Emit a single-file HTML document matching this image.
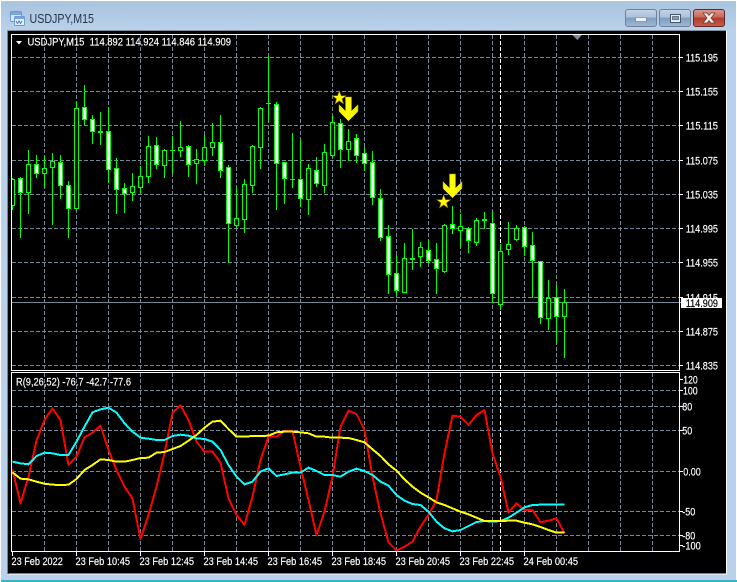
<!DOCTYPE html>
<html><head><meta charset="utf-8"><title>USDJPY,M15</title>
<style>html,body{margin:0;padding:0;background:#fff;width:737px;height:582px;overflow:hidden}svg{display:block}text{font-family:"Liberation Sans",sans-serif;font-size:11px;fill:#fff;stroke:#fff;stroke-width:.18px}</style></head>
<body>
<svg xmlns="http://www.w3.org/2000/svg" width="737" height="582" viewBox="0 0 737 582">
<defs>
<linearGradient id="tb" x1="0" y1="0" x2="0" y2="1"><stop offset="0" stop-color="#b0c7de"/><stop offset=".1" stop-color="#aac5df"/><stop offset="1" stop-color="#bad2ea"/></linearGradient>
<linearGradient id="bt" x1="0" y1="0" x2="0" y2="1"><stop offset="0" stop-color="#c3d5e8"/><stop offset=".45" stop-color="#a9c1da"/><stop offset=".5" stop-color="#7f9dbe"/><stop offset="1" stop-color="#9db9d6"/></linearGradient>
<linearGradient id="cl" x1="0" y1="0" x2="0" y2="1"><stop offset="0" stop-color="#dd9a8e"/><stop offset=".45" stop-color="#c8675a"/><stop offset=".5" stop-color="#b23a2c"/><stop offset="1" stop-color="#c95f48"/></linearGradient>
<linearGradient id="ar" x1="0" y1="0" x2="1" y2="0"><stop offset="0" stop-color="#f5f500"/><stop offset=".5" stop-color="#ff0"/><stop offset="1" stop-color="#e8e800"/></linearGradient>
</defs>
<path d="M1 582V5Q1 1 5 1H732Q736 1 736 5V582Z" fill="#b9d1ea"/>
<rect x="1" y="1" width="735" height="30" fill="url(#tb)"/>
<rect x="1" y="580" width="736" height="2" fill="#3ab4c4"/>
<rect x="7" y="31" width="720" height="543.500" fill="#fff"/>
<rect x="7" y="30" width="719" height="1" fill="#7f8fa0"/>
<rect x="7" y="31" width="2" height="543" fill="#7c8490"/>
<rect x="8" y="31" width="718" height="542.500" fill="#000"/>

<!-- Title icon -->
<rect x="10.500" y="11.500" width="11" height="10" rx="1" fill="#d9e8f7" stroke="#6f9bd4"/>
<rect x="11" y="12" width="10" height="3" fill="#7aa5df"/>
<rect x="14.500" y="16.500" width="10" height="9" rx="1" fill="#e4effa" stroke="#6f9bd4"/>
<rect x="15" y="17" width="9" height="2" fill="#7aa5df"/>
<path d="M16 21l1.500 2.500 1.500-2.500 1.500 2.500 1.500-2.500" fill="none" stroke="#4c7cc0"/>
<text x="29.500" y="23" textLength="64.500" lengthAdjust="spacingAndGlyphs" style="font-size:12.500px;fill:#27334a;stroke:none">USDJPY,M15</text>

<!-- Window buttons -->
<rect x="625.500" y="9.500" width="31" height="17" rx="2.500" fill="url(#bt)" stroke="#6f8199"/>
<rect x="635.500" y="17.500" width="11" height="4" rx="1" fill="#eef2f7" stroke="#5d6f86" stroke-width=".6"/>
<rect x="659.500" y="9.500" width="31" height="17" rx="2.500" fill="url(#bt)" stroke="#6f8199"/>
<rect x="670.500" y="14.500" width="10" height="8" fill="#e6edf5" stroke="#47566b"/>
<rect x="672.500" y="16.500" width="6" height="3" fill="#7f9dbe" stroke="#47566b" stroke-width=".7"/>
<rect x="693.500" y="9.500" width="31" height="17" rx="2.500" fill="url(#cl)" stroke="#5a2a30"/>
<path d="M703 13h4l2 2.500 2-2.500h4l-4 5 4 5h-4l-2-2.500-2 2.500h-4l4-5z" fill="#f1ecea" stroke="#6d3a36" stroke-width=".7"/>

<!-- Grid main -->
<path d="M12 57.500H680M12 91.500H680M12 125.500H680M12 160.500H680M12 194.500H680M12 228.500H680M12 262.500H680M12 297.500H680M12 331.500H680M12 365.500H680M44.500 35V370M76.500 35V370M108.500 35V370M140.500 35V370M172.500 35V370M204.500 35V370M236.500 35V370M268.500 35V370M300.500 35V370M332.500 35V370M364.500 35V370M396.500 35V370M428.500 35V370M460.500 35V370M492.500 35V370M524.500 35V370M556.500 35V370M588.500 35V370M620.500 35V370M652.500 35V370" stroke="#778899" stroke-dasharray="4 2" fill="none" shape-rendering="crispEdges"/>
<path d="M500.500 35V370M500.500 373V552" stroke="#fff" stroke-dasharray="4 2" fill="none" shape-rendering="crispEdges"/>
<path d="M12 302.500H680" stroke="#778899" shape-rendering="crispEdges"/>

<!-- Wicks -->
<path d="M12.500 178V210M20.500 177V238M28.500 150V214M36.500 155V178M44.500 156V188M52.500 153V225M60.500 155V199M68.500 181V238M76.500 102V209M84.500 85V126M92.500 115V144M100.500 112V145M108.500 107V183M116.500 158V214M124.500 183V213M132.500 173V201M140.500 166V193M148.500 136V183M156.500 137V169M164.500 149V178M172.500 136V174M180.500 121V157M188.500 145V177M196.500 149V184M204.500 135V166M212.500 123V156M220.500 115V178M228.500 165V263M236.500 187V228M244.500 179V233M252.500 145V193M260.500 107V169M268.500 56V122M276.500 102V210M284.500 162V204M292.500 133V188M300.500 140V207M308.500 164V215M316.500 157V187M324.500 144V193M332.500 116V158M340.500 119V168M348.500 129V161M356.500 134V163M364.500 147V171M372.500 151V205M380.500 189V241M388.500 225V294M396.500 255V296M404.500 243V293M412.500 229V270M420.500 242V267M428.500 240V264M436.500 243V294M444.500 224V273M452.500 206V234M460.500 214V247M468.500 227V253M476.500 218V246M484.500 212V229M492.500 211V303M500.500 244V310M508.500 222V255M516.500 225V241M524.500 226V256M532.500 232V298M540.500 261V324M548.500 280V330M556.500 285V343M564.500 289V358" stroke="#0f0" fill="none" shape-rendering="crispEdges"/>

<!-- Hollow bodies -->
<path d="M11.500 179h3v26h-3zM26.500 164h4v28h-4zM42.500 168h4v5h-4zM50.500 161h4v6h-4zM74.500 108h4v100h-4zM130.500 186h4v6h-4zM138.500 176h4v11h-4zM146.500 146h4v30h-4zM162.500 150h4v15h-4zM178.500 147h4v3h-4zM194.500 159h4v4h-4zM202.500 147h4v13h-4zM210.500 142h4v5h-4zM234.500 218h4v7h-4zM242.500 184h4v35h-4zM250.500 146h4v39h-4zM258.500 108h4v39h-4zM306.500 168h4v31h-4zM322.500 152h4v33h-4zM330.500 122h4v33h-4zM346.500 141h4v8h-4zM402.500 258h4v34h-4zM418.500 247h4v9h-4zM442.500 225h4v46h-4zM458.500 226h4v4h-4zM474.500 220h4v22h-4zM498.500 251h4v53h-4zM506.500 244h4v5h-4zM514.500 228h4v11h-4zM546.500 298h4v20h-4zM562.500 302h4v14h-4z" transform="translate(0 .5)" fill="#000" stroke="#0f0" shape-rendering="crispEdges"/>

<!-- White bodies -->
<path d="M18.500 178h4v14h-4zM34.500 164h4v9h-4zM58.500 162h4v23h-4zM66.500 185h4v23h-4zM82.500 107h4v12h-4zM90.500 119h4v12h-4zM106.500 131h4v38h-4zM114.500 168h4v21h-4zM122.500 188h4v5h-4zM154.500 145h4v19h-4zM186.500 146h4v18h-4zM218.500 142h4v28h-4zM226.500 167h4v56h-4zM274.500 104h4v59h-4zM282.500 162h4v16h-4zM298.500 179h4v19h-4zM314.500 170h4v13h-4zM338.500 123h4v26h-4zM354.500 138h4v17h-4zM362.500 153h4v10h-4zM370.500 162h4v35h-4zM378.500 198h4v39h-4zM386.500 236h4v38h-4zM394.500 273h4v17h-4zM426.500 250h4v10h-4zM434.500 259h4v9h-4zM450.500 224h4v4h-4zM466.500 228h4v12h-4zM490.500 223h4v70h-4zM522.500 227h4v19h-4zM530.500 245h4v15h-4zM538.500 261h4v56h-4zM554.500 297h4v19h-4z" transform="translate(0 .5)" fill="#fff" stroke="#0f0" shape-rendering="crispEdges"/>

<!-- Doji -->
<path d="M98 131h5v2h-5zM170 150h5v1h-5zM266 103h5v1h-5zM290 179h5v1h-5zM410 258h5v2h-5zM482 219h5v2h-5z" fill="#0f0" shape-rendering="crispEdges"/>

<!-- Arrows + stars -->
<path d="M345.500 97H351.500V111L358 104.500V111.500L348.500 121L339 111.500V104.500L345.500 111Z" fill="url(#ar)" stroke="#a89400" stroke-width=".5"/>
<path d="M449.500 174H455.500V188L462 181.500V188.500L452.500 198L443 188.500V181.500L449.500 188Z" fill="url(#ar)" stroke="#a89400" stroke-width=".5"/>
<path d="M339.300 91L341 95.700 346 95.800 342 98.900 343.400 103.700 339.300 100.800 335.200 103.700 336.600 98.900 332.600 95.800 337.600 95.700Z" fill="#ff0" stroke="#b57a00" stroke-width=".6"/>
<path d="M443.700 195L445.400 199.700 450.400 199.800 446.400 202.900 447.800 207.700 443.700 204.800 439.600 207.700 441 202.900 437 199.800 442 199.700Z" fill="#ff0" stroke="#b57a00" stroke-width=".6"/>

<!-- Sub grid -->
<path d="M12 390.500H680M12 406.500H680M12 430.500H680M12 471.500H680M12 511.500H680M12 535.500H680M44.500 373V552M76.500 373V552M108.500 373V552M140.500 373V552M172.500 373V552M204.500 373V552M236.500 373V552M268.500 373V552M300.500 373V552M332.500 373V552M364.500 373V552M396.500 373V552M428.500 373V552M460.500 373V552M492.500 373V552M524.500 373V552M556.500 373V552M588.500 373V552M620.500 373V552M652.500 373V552" stroke="#778899" stroke-dasharray="4 2" fill="none" shape-rendering="crispEdges"/>

<!-- Indicator lines -->
<g transform="translate(.5 370) scale(.33333)" fill="none" stroke-width="6" stroke-linejoin="round" shape-rendering="crispEdges">
<polyline stroke="#f00" points="36,298 60,400 84,320 108,212 132,150 156,115 180,150 204,285 228,260 252,202 276,188 300,167 324,240 348,300 372,350 396,385 420,507 444,435 468,350 492,250 516,128 540,106 564,150 588,215 612,245 636,245 660,278 684,385 708,435 732,465 756,380 780,270 804,200 828,200 852,183 876,183 900,290 924,390 948,495 972,425 996,320 1020,170 1044,122 1068,132 1092,180 1116,320 1140,430 1164,517 1188,542 1212,530 1236,515 1260,470 1284,435 1308,390 1332,250 1356,137 1380,140 1404,165 1428,135 1452,120 1476,250 1500,320 1524,427 1548,400 1572,420 1596,420 1620,457 1644,452 1668,445 1692,490"/>
<polyline stroke="#0ff" points="36,275 60,280 84,283 108,258 132,248 156,250 180,255 204,255 228,215 252,170 276,127 300,118 324,113 348,128 372,160 396,185 420,203 444,206 468,210 492,210 516,198 540,194 564,197 588,205 612,207 636,215 660,240 684,285 708,320 732,343 756,335 780,305 804,295 828,318 852,313 876,308 900,308 924,293 948,303 972,315 996,315 1020,320 1044,305 1068,296 1092,303 1116,315 1140,335 1164,347 1188,375 1212,392 1236,402 1260,405 1284,425 1308,455 1332,475 1356,484 1380,480 1404,468 1428,456 1452,453 1476,455 1500,453 1524,443 1548,428 1572,412 1596,405 1620,404 1644,404 1668,404 1692,404"/>
<polyline stroke="#ff0" points="36,307 60,326 84,328 108,335 132,341 156,344 180,345 204,344 228,327 252,300 276,285 300,268 324,270 348,275 372,275 396,270 420,264 444,263 468,248 492,246 516,237 540,228 564,212 588,195 612,173 636,155 660,152 684,177 708,200 732,200 756,198 780,198 804,197 828,187 852,185 876,185 900,187 924,190 948,200 972,200 996,203 1020,203 1044,204 1068,210 1092,217 1116,238 1140,258 1164,283 1188,302 1212,328 1236,350 1260,368 1284,382 1308,397 1332,405 1356,415 1380,425 1404,433 1428,443 1452,453 1476,453 1500,453 1524,452 1548,452 1572,458 1596,463 1620,471 1644,480 1668,488 1692,488"/>
</g>

<!-- Frames -->
<rect x="11.500" y="34.500" width="668" height="336" fill="none" stroke="#fff" shape-rendering="crispEdges"/>
<rect x="11.500" y="372.500" width="668" height="179" fill="none" stroke="#fff" shape-rendering="crispEdges"/>
<path d="M680 57.500h3M680 91.500h3M680 125.500h3M680 160.500h3M680 194.500h3M680 228.500h3M680 262.500h3M680 297.500h3M680 331.500h3M680 365.500h3M680 379.500h3M680 390.500h3M680 406.500h3M680 430.500h3M680 471.500h3M680 511.500h3M680 535.500h3M680 545.500h3M12.500 552v4M76.500 552v4M140.500 552v4M204.500 552v4M268.500 552v4M332.500 552v4M396.500 552v4M460.500 552v4M524.500 552v4" stroke="#fff" fill="none" shape-rendering="crispEdges"/>
<path d="M572.500 35H582L577.300 40Z" fill="#7f8b9b"/>

<!-- Header labels -->
<path d="M16 41h6l-3 3.500z" fill="#fff"/>
<text x="27.500" y="45.500" textLength="203.500" lengthAdjust="spacingAndGlyphs" xml:space="preserve">USDJPY,M15  114.892 114.924 114.846 114.909</text>
<text x="16" y="385.500" textLength="115" lengthAdjust="spacingAndGlyphs">R(9,26,52) -76.7 -42.7 -77.6</text>

<!-- Price labels -->
<g>
<text x="685.700" y="61.500" textLength="32.300" lengthAdjust="spacingAndGlyphs">115.195</text>
<text x="685.700" y="95.500" textLength="32.300" lengthAdjust="spacingAndGlyphs">115.155</text>
<text x="685.700" y="129.500" textLength="32.300" lengthAdjust="spacingAndGlyphs">115.115</text>
<text x="685.700" y="164.500" textLength="32.300" lengthAdjust="spacingAndGlyphs">115.075</text>
<text x="685.700" y="198.500" textLength="32.300" lengthAdjust="spacingAndGlyphs">115.035</text>
<text x="685.700" y="232.500" textLength="32.300" lengthAdjust="spacingAndGlyphs">114.995</text>
<text x="685.700" y="266.500" textLength="32.300" lengthAdjust="spacingAndGlyphs">114.955</text>
<text x="685.700" y="301.500" textLength="32.300" lengthAdjust="spacingAndGlyphs">114.915</text>
<text x="685.700" y="335.500" textLength="32.300" lengthAdjust="spacingAndGlyphs">114.875</text>
<text x="685.700" y="369.500" textLength="32.300" lengthAdjust="spacingAndGlyphs">114.835</text>
<rect x="681" y="298" width="41" height="10" fill="#fff"/>
<path d="M680 302.500h1" stroke="#778899"/>
<text x="685.700" y="307" textLength="32.300" lengthAdjust="spacingAndGlyphs" style="fill:#000;stroke:#000">114.909</text>
</g>

<!-- Indicator scale -->
<g>
<text x="683.300" y="383.500" textLength="14.400" lengthAdjust="spacingAndGlyphs">120</text>
<text x="683" y="394.500" textLength="14.700" lengthAdjust="spacingAndGlyphs">100</text>
<text x="682.300" y="410.500" textLength="10" lengthAdjust="spacingAndGlyphs">80</text>
<text x="682.300" y="434.500" textLength="10" lengthAdjust="spacingAndGlyphs">50</text>
<text x="683.300" y="475.500" textLength="17.500" lengthAdjust="spacingAndGlyphs">0.00</text>
<text x="682.300" y="515.500" textLength="13" lengthAdjust="spacingAndGlyphs">-50</text>
<text x="682.300" y="539.500" textLength="13" lengthAdjust="spacingAndGlyphs">-80</text>
<text x="682.300" y="549.500" textLength="18.500" lengthAdjust="spacingAndGlyphs">-100</text>
</g>

<!-- Time labels -->
<g>
<text x="11.500" y="565" textLength="51.300" lengthAdjust="spacingAndGlyphs">23 Feb 2022</text>
<text x="75.500" y="565" textLength="54.500" lengthAdjust="spacingAndGlyphs">23 Feb 10:45</text>
<text x="139.500" y="565" textLength="54.500" lengthAdjust="spacingAndGlyphs">23 Feb 12:45</text>
<text x="203.500" y="565" textLength="54.500" lengthAdjust="spacingAndGlyphs">23 Feb 14:45</text>
<text x="267.500" y="565" textLength="54.500" lengthAdjust="spacingAndGlyphs">23 Feb 16:45</text>
<text x="331.500" y="565" textLength="54.500" lengthAdjust="spacingAndGlyphs">23 Feb 18:45</text>
<text x="395.500" y="565" textLength="54.500" lengthAdjust="spacingAndGlyphs">23 Feb 20:45</text>
<text x="459.500" y="565" textLength="54.500" lengthAdjust="spacingAndGlyphs">23 Feb 22:45</text>
<text x="523.500" y="565" textLength="54.500" lengthAdjust="spacingAndGlyphs">24 Feb 00:45</text>
</g>
</svg>
</body></html>
